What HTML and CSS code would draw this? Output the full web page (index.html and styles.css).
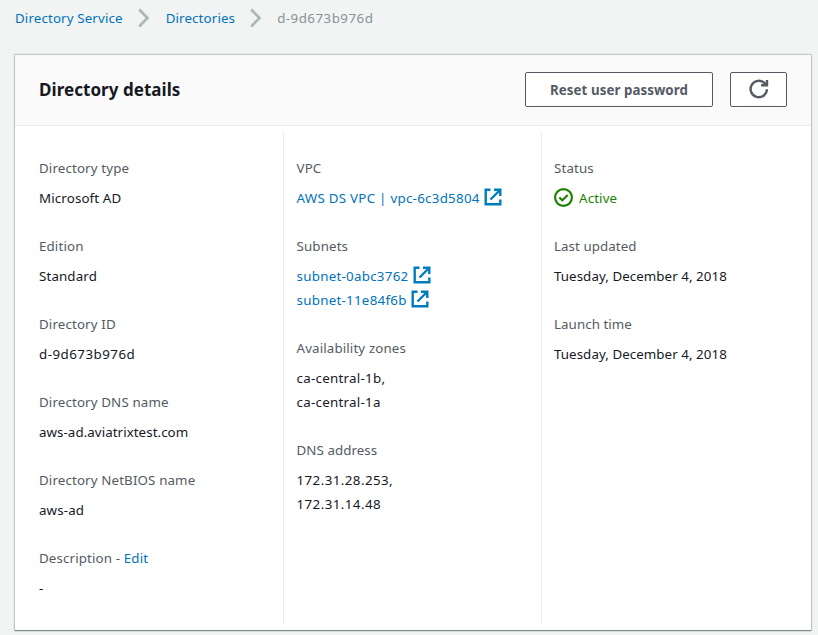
FILE: index.html
```html
<!DOCTYPE html>
<html lang="en">
<head>
<meta charset="utf-8">
<title>Directory details</title>
<link rel="stylesheet" href="styles.css">
</head>
<body>
<svg class="defs" width="0" height="0">
  <symbol id="external" viewBox="0 0 18 18"><path d="M6.5 1.7H1.7V16.3H16.3V11.5M10 1.7H16.3V8M16 2L6.5 11.5" fill="none" stroke="currentColor" stroke-width="2.4"/></symbol>
  <symbol id="chevron" viewBox="0 0 12 20"><path d="M1.2 1.5L9.5 10L1.2 18.5" fill="none" stroke="currentColor" stroke-width="2.6"/></symbol>
</svg>
<nav class="crumbs">
  <a>Directory Service</a>
  <svg class="chev"><use href="#chevron"/></svg>
  <a>Directories</a>
  <svg class="chev second"><use href="#chevron"/></svg>
  <span class="current id">d-9d673b976d</span>
</nav>
<main class="card">
  <header class="head">
    <h1>Directory details</h1>
    <button class="btn reset"><span>Reset user password</span></button>
    <button class="btn refresh" aria-label="Refresh"><svg width="20" height="20" viewBox="0 0 20 20"><path d="M18 10.3A8.2 8.2 0 1 1 15.6 4.2L16.8 5.6M18 1V6.2H12.1" fill="none" stroke="currentColor" stroke-width="2.4"/></svg></button>
  </header>
  <div class="cols">
    <dl class="col">
      <dt>Directory type</dt><dd>Microsoft AD</dd>
      <dt>Edition</dt><dd>Standard</dd>
      <dt>Directory ID</dt><dd class="id">d-9d673b976d</dd>
      <dt>Directory DNS name</dt><dd class="plain">aws-ad.aviatrixtest.com</dd>
      <dt>Directory NetBIOS name</dt><dd>aws-ad</dd>
      <dt>Description - <a>Edit</a></dt><dd>-</dd>
    </dl>
    <dl class="col">
      <dt>VPC</dt><dd class="wide"><a class="ext">AWS DS VPC | vpc-6c3d5804<svg><use href="#external"/></svg></a></dd>
      <dt>Subnets</dt><dd class="wide"><a class="ext">subnet-0abc3762<svg><use href="#external"/></svg></a><a class="ext">subnet-11e84f6b<svg><use href="#external"/></svg></a></dd>
      <dt>Availability zones</dt><dd class="wide">ca-central-1b,<br>ca-central-1a</dd>
      <dt class="plain">DNS address</dt><dd class="address">172.31.28.253,<br>172.31.14.48</dd>
    </dl>
    <dl class="col">
      <dt>Status</dt><dd class="active"><svg width="20" height="20" viewBox="0 0 20 20" fill="none" stroke="currentColor" stroke-width="2.2"><circle cx="9.5" cy="9.5" r="8.4"/><path d="M5.3 9.5L8.3 12.3L13.7 7"/></svg><span>Active</span></dd>
      <dt class="plain">Last updated</dt><dd class="plain">Tuesday, December 4, 2018</dd>
      <dt class="plain">Launch time</dt><dd class="plain">Tuesday, December 4, 2018</dd>
    </dl>
  </div>
</main>
</body>
</html>
```
FILE: styles.css
```css
* { box-sizing: border-box; }
body {
  margin: 0;
  height: 635px;
  overflow: hidden;
  background: #f2f3f3;
  font: 13.33px/24px "Noto Sans", sans-serif;
  letter-spacing: .13px;
  color: #16191f;
}
a { color: #0073bb; text-decoration: none; }
.defs { display: none; }
.crumbs { display: flex; align-items: center; height: 36px; padding-left: 15px; white-space: nowrap; }
.chev { width: 12px; height: 20px; margin: 0 15.5px; color: #aab7b8; }
.chev.second { margin-left: 14.5px; }
.current { color: #879596; }
.id { letter-spacing: .48px; }
.wide { letter-spacing: .27px; }
.address { letter-spacing: .43px; }
.plain { letter-spacing: .06px; }
.card {
  width: 796px;
  height: 575px;
  margin: 19px 0 0 15px;
  background: #fff;
  box-shadow: 0 1px 1px 0 rgba(0,28,36,.4), 0 0 1px 1px rgba(0,28,36,.16), 0 -1px 0 0 #e5eaea;
}
.head {
  display: flex;
  align-items: center;
  height: 71px;
  padding: 0 24px 2px;
  background: #fafafa;
  border-bottom: 1px solid #eaeded;
}
h1 { margin: 2px auto 0 0; font-size: 17px; font-weight: 700; letter-spacing: .05px; }
.btn {
  display: flex;
  align-items: center;
  justify-content: center;
  height: 35px;
  padding: 0;
  border: 1px solid #545b64;
  border-radius: 2px;
  background: #fff;
  color: #545b64;
  font: 700 13.33px/24px "Noto Sans", sans-serif;
  letter-spacing: .05px;
}
.reset { width: 188px; margin-right: 17px; padding-top: 2px; }
.refresh { width: 57px; }
.cols { display: grid; grid-template-columns: 269px 258px 269px; height: 498px; padding: 6px 0 0; }
.col { height: 492px; margin: 0; padding: 24px 0 0 12.5px; border-right: 1px solid #eaeded; white-space: nowrap; }
.col:first-child { padding-left: 24px; }
.col:last-child { padding-left: 12px; border-right: 0; }
dt { color: #545b64; margin-bottom: 6px; }
dd { margin: 0 0 24px; }
.ext { display: flex; align-items: center; height: 24px; }
.ext svg { width: 18px; height: 18px; margin: -2px 0 0 4.2px; color: #007dbc; }
.active { display: flex; align-items: center; color: #1d8102; }
.active svg { margin-right: 5px; }
```
